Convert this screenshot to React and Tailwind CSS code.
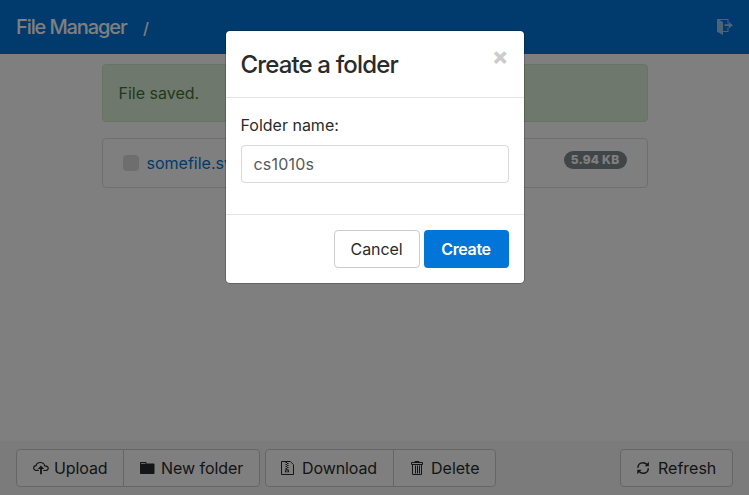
import React from "react";

const UploadIcon = () => (
  <svg className="mr-[5px] block h-4 w-4 shrink-0" viewBox="0 0 16 16" fill="none" stroke="currentColor">
    <path strokeWidth="1.2" d="M5.800 10.400H3.400C1.800 10.400.7 9.400.7 8c0-1.300.9-2.300 2.400-2.400C3.400 3.600 5.200 2.500 7.300 2.500c2.200 0 4 1.300 4.400 3.300 2 0 3.500 1 3.500 2.500 0 1.300-1.200 2.200-2.800 2.200H10.200" />
    <path fill="currentColor" stroke="none" d="M8 5.600 11.200 9H8.900v5.200H7.100V9H4.800z" />
  </svg>
);

const FolderIcon = () => (
  <svg className="mr-[5px] block h-4 w-4 shrink-0" viewBox="0 0 16 16" fill="currentColor">
    <path d="M0 3C0 2.400.400 2 1 2h4.500c.6 0 1 .4 1 1v.6h7c.6 0 1 .4 1 1V13c0 .6-.4 1-1 1H1c-.6 0-1-.4-1-1zM1 3v.8h4.600V3z" fillRule="evenodd" />
  </svg>
);

const ZipIcon = () => (
  <svg className="mr-[6px] -ml-px block h-4 w-4 shrink-0" viewBox="0 0 16 16" fill="none" stroke="currentColor">
    <path strokeWidth="1" d="M1.500 1.500H10.300L13.500 4.700V14.500H1.500z" />
    <path strokeWidth="1" d="M5.500 2.500H7M7 3.500h1.500M5.500 4.500H7M7 5.500h1.500M5.500 6.500H7M7 7.500h1.500M5.500 8.500H7" />
    <path stroke="none" fill="currentColor" fillRule="evenodd" d="M5.500 9.200h3l.7 3H4.800zM6 10.600v.8h2v-.8z" />
  </svg>
);

const TrashIcon = () => (
  <svg className="mr-[5px] block h-4 w-4 shrink-0" viewBox="0 0 16 16" fill="none" stroke="currentColor">
    <path d="M5 2.500V1.500h4v1M1.500 4.500v-2h11v2zM2.500 4.500v10h9v-10M5.500 5.500v8M7.500 5.500v8M9.500 5.500v8" />
  </svg>
);

const RefreshIcon = () => (
  <svg className="mr-[5px] block h-4 w-4 shrink-0" viewBox="0 0 16 16" fill="none" stroke="currentColor" strokeWidth="1.500">
    <path d="M.9 7.800C.9 4.700 3.200 2.700 6 2.700c1.600 0 2.800.6 3.900 1.800M11.300 8.200c0 3.100-2.300 5.100-5.100 5.100-1.700 0-2.900-.6-4-1.900" />
    <path fill="currentColor" stroke="none" d="M11.900 1.800v4.400H7.700zM.3 14.200V9.800h4.300z" />
  </svg>
);

const ExitIcon = () => (
  <svg className="block h-4 w-4" viewBox="0 0 16 16" fill="currentColor">
    <path d="M0 0h11.500v4.500h-1V1H2.500L6 3v9h4.500V8.500h1V13H6v3L0 12.800z" />
    <path d="M7.500 5.300h4.300V3L16 6.200 11.800 9.400V7.100H7.500z" />
  </svg>
);

const btn = "flex h-[38px] items-center whitespace-nowrap border border-[#ccc] bg-white text-[#292b2c]";

export default function App() {
  return (
    <div className="relative flex h-[495px] w-[749px] flex-col overflow-hidden bg-white font-['Inter','Liberation_Sans',sans-serif] text-[16px] leading-6 text-[#292b2c]">
      <header className="flex h-[54px] shrink-0 items-center bg-[#0275d8] px-4 text-white">
        <span className="w-[127px] text-[20px] font-medium tracking-[-1.1px] whitespace-nowrap">File Manager</span>
        <span className="pt-px font-medium">/</span>
        <button className="ml-auto text-white/60"><ExitIcon /></button>
      </header>

      <main className="mx-auto w-[546px] grow pt-[10px]">
        <div className="rounded border border-[#d0e9c6] bg-[#dff0d8] p-4 text-[#3c763d]">File saved.</div>
        <div className="mt-4 flex h-[50px] items-center rounded border border-black/[0.125] px-5">
          <span className="mr-2 h-4 w-4 rounded bg-[#ddd]" />
          <a className="text-[#0275d8]">somefile.svg</a>
          <span className="mb-[7px] ml-auto flex h-[18px] w-[63px] items-center justify-center rounded-full bg-[#818a91] text-[12px] font-extrabold tracking-[0.2px] text-white">5.94 KB</span>
        </div>
      </main>

      <footer className="flex h-[54px] shrink-0 items-center bg-[#f7f7f7] px-4">
        <button className={btn + " w-[108px] rounded-l px-4 tracking-[-0.1px]"}><UploadIcon />Upload</button>
        <button className={btn + " -ml-px w-[137px] rounded-r px-4 tracking-[-0.05px]"}><FolderIcon />New folder</button>
        <button className={btn + " ml-[5px] w-[129px] rounded-l px-[15px] tracking-[-0.1px]"}><ZipIcon />Download</button>
        <button className={btn + " -ml-px w-[103px] rounded-r px-4"}><TrashIcon />Delete</button>
        <button className={btn + " ml-auto w-[113px] rounded px-4"}><RefreshIcon />Refresh</button>
      </footer>

      <div className="absolute inset-0 flex items-start justify-center bg-black/50 pt-[30px]">
        <div className="w-[300px] rounded-[5px] border border-black/20 bg-white bg-clip-padding">
          <div className="flex h-[67px] items-start justify-between border-b border-[#e5e5e5] p-[15px]">
            <h4 className="pt-px text-[24px] leading-9 font-medium tracking-[-0.85px]">Create a folder</h4>
            <button className="mt-[-1px] text-[24px] leading-6 font-extrabold text-[#ccc]">×</button>
          </div>
          <div className="p-[15px] pb-[31px]">
            <label className="mb-2 block">Folder name:</label>
            <div className="flex h-[38px] items-center rounded border border-black/15 px-3 tracking-[0.2px] text-[#55595c]">cs1010s</div>
          </div>
          <div className="flex justify-end gap-1 border-t border-[#e5e5e5] p-[15px]">
            <button className={btn + " w-[86px] justify-center rounded tracking-[-0.1px]"}>Cancel</button>
            <button className="h-[38px] w-[85px] rounded bg-[#0275d8] font-semibold tracking-[-0.35px] text-white">Create</button>
          </div>
        </div>
      </div>
    </div>
  );
}
